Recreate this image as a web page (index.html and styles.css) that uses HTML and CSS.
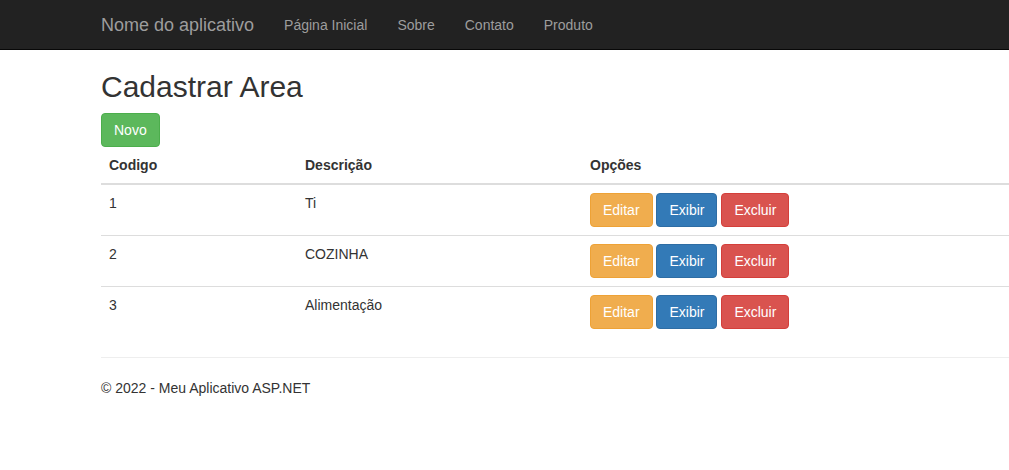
FILE: index.html
```html
<!DOCTYPE html>
<html lang="pt-BR">
<head>
<meta charset="utf-8">
<title>Cadastrar Area</title>
<link rel="stylesheet" href="styles.css">
</head>
<body>
<nav class="navbar">
  <a class="brand" href="#">Nome do aplicativo</a>
  <ul class="nav">
    <li><a href="#">Página Inicial</a></li>
    <li><a href="#">Sobre</a></li>
    <li><a href="#">Contato</a></li>
    <li><a href="#">Produto</a></li>
  </ul>
</nav>
<div class="content">
  <h2 class="title">Cadastrar Area</h2>
  <div class="actions"><a class="btn btn-success" href="#">Novo</a></div>
  <table class="table">
    <thead>
      <tr><th class="col-code">Codigo</th><th class="col-desc">Descrição</th><th>Opções</th></tr>
    </thead>
    <tbody>
      <tr>
        <td>1</td><td>Ti</td>
        <td><a class="btn btn-warning" href="#">Editar</a> <a class="btn btn-primary" href="#">Exibir</a> <a class="btn btn-danger" href="#">Excluir</a></td>
      </tr>
      <tr>
        <td>2</td><td>COZINHA</td>
        <td><a class="btn btn-warning" href="#">Editar</a> <a class="btn btn-primary" href="#">Exibir</a> <a class="btn btn-danger" href="#">Excluir</a></td>
      </tr>
      <tr>
        <td>3</td><td>Alimentação</td>
        <td><a class="btn btn-warning" href="#">Editar</a> <a class="btn btn-primary" href="#">Exibir</a> <a class="btn btn-danger" href="#">Excluir</a></td>
      </tr>
    </tbody>
  </table>
  <hr class="rule">
  <footer class="footer"><p>© 2022 - Meu Aplicativo ASP.NET</p></footer>
</div>
</body>
</html>
```

FILE: styles.css
```css
* { box-sizing: border-box; }
html, body { margin: 0; padding: 0; }
body {
  font-family: "Liberation Sans", Arial, Helvetica, sans-serif;
  font-size: 14px;
  line-height: 1.42857143;
  color: #333;
  background: #fff;
  overflow: hidden;
}
.navbar {
  display: flex;
  align-items: stretch;
  height: 50px;
  background: #222;
  border-bottom: 1px solid #080808;
  padding-left: 86px;
}
.brand {
  display: block;
  padding: 15px;
  height: 50px;
  font-size: 18px;
  line-height: 20px;
  color: #9d9d9d;
  text-decoration: none;
}
.nav {
  display: flex;
  list-style: none;
  margin: 0;
  padding: 0;
}
.nav a {
  display: block;
  padding: 15px;
  line-height: 20px;
  color: #9d9d9d;
  text-decoration: none;
}
.content {
  padding-left: 101px;
}
.title {
  margin: 20px 0 10px;
  font-size: 30px;
  font-weight: 500;
  line-height: 1.1;
  color: #333;
}
.actions { margin: 0; }
.btn {
  display: inline-block;
  padding: 6px 12px;
  font-size: 14px;
  line-height: 1.42857143;
  border: 1px solid transparent;
  border-radius: 4px;
  color: #fff;
  text-decoration: none;
  vertical-align: middle;
  white-space: nowrap;
}
.btn-success { background: #5cb85c; border-color: #4cae4c; }
.btn-warning { background: #f0ad4e; border-color: #eea236; }
.btn-primary { background: #337ab7; border-color: #2e6da4; }
.btn-danger { background: #d9534f; border-color: #d43f3a; }
.table {
  width: 100%;
  border-collapse: collapse;
  border-spacing: 0;
  margin-bottom: 20px;
}
.table th, .table td {
  padding: 8px;
  line-height: 1.42857143;
  text-align: left;
  vertical-align: top;
}
.table th {
  vertical-align: bottom;
  font-weight: bold;
  border-bottom: 2px solid #ddd;
}
.table td { border-top: 1px solid #ddd; }
.table tbody tr:first-child td { border-top: 0; }
.col-code { width: 196px; }
.col-desc { width: 285px; }
.rule {
  margin: 20px 0;
  border: 0;
  border-top: 1px solid #eee;
  height: 0;
}
.footer p { margin: 0 0 10px; }
```
